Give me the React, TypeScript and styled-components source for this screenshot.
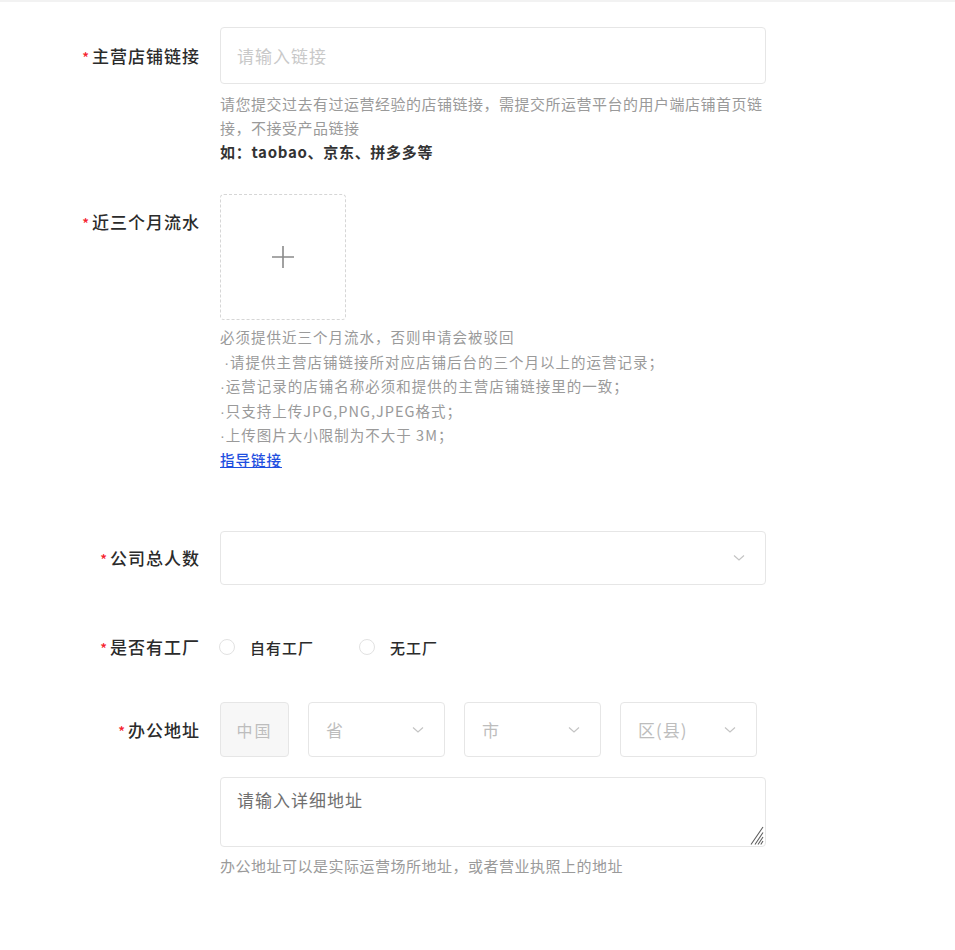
import React from "react";
import styled, { createGlobalStyle } from "styled-components";

const Global = createGlobalStyle`
  html, body { margin: 0; padding: 0; background: #fff; }
  body { font-family: "Noto Sans CJK SC", "Noto Sans", sans-serif; color: #333; }
  * { box-sizing: border-box; }
`;

const Page = styled.div`
  border-top: 2px solid #f2f2f2;
  padding-top: 25px;
  min-height: 950px;
`;

const Row = styled.div<{ $mb?: number }>`
  display: grid;
  grid-template-columns: 200px 546px;
  column-gap: 20px;
  margin-bottom: ${(p) => p.$mb ?? 0}px;
`;

const Label = styled.div<{ $h?: number }>`
  text-align: right;
  font-size: 17px;
  letter-spacing: 1px;
  line-height: ${(p) => p.$h ?? 56}px;
  height: ${(p) => p.$h ?? 56}px;
  font-weight: 500;
  color: #2b2b2b;
  white-space: nowrap;
`;

const Star = styled.span`
  color: #f5222d;
  font-size: 14px;
  margin-right: 3px;
  letter-spacing: 0;
`;

const Field = styled.div`
  display: flex;
  flex-direction: column;
  min-width: 0;
`;

const TextInput = styled.input`
  height: 57px;
  width: 100%;
  border: 1px solid #e6e6e6;
  border-radius: 4px;
  padding: 0 16px;
  font-family: inherit;
  font-size: 17px;
  letter-spacing: 1px;
  color: #333;
  outline: none;
  &::placeholder { color: #c9c9c9; }
`;

const Help = styled.div<{ $mt?: number; $size?: number; $lh?: number; $ls?: number }>`
  margin-top: ${(p) => p.$mt ?? 8}px;
  font-size: ${(p) => p.$size ?? 15}px;
  letter-spacing: ${(p) => p.$ls ?? 0.5}px;
  line-height: ${(p) => p.$lh ?? 24}px;
  color: #9a9a9a;
`;

const Dot = styled.span`
  font-family: "Liberation Sans", sans-serif;
  letter-spacing: 0;
  line-height: 0;
  margin-right: 1px;
`;

const Strong = styled.div`
  color: #333;
  font-weight: 700;
  letter-spacing: 0.7px;
`;

const GuideLink = styled.a`
  color: #1f4fe0;
  text-decoration: underline;
  font-weight: 500;
  cursor: pointer;
`;

const Upload = styled.div`
  width: 126px;
  height: 126px;
  border: 1px dashed #d6d6d6;
  border-radius: 4px;
  display: flex;
  align-items: center;
  justify-content: center;
`;

const Select = styled.div<{ $w?: number; $h?: number }>`
  height: ${(p) => p.$h ?? 54}px;
  width: ${(p) => (p.$w ? `${p.$w}px` : "100%")};
  border: 1px solid #e6e6e6;
  border-radius: 4px;
  display: flex;
  align-items: center;
  justify-content: space-between;
  padding: 0 20px 0 17px;
  font-size: 17px;
  letter-spacing: 1px;
  color: #bdbdbd;
  background: #fff;
  flex-shrink: 0;
`;

const Country = styled.div`
  height: 55px;
  width: 69px;
  border: 1px solid #e6e6e6;
  border-radius: 4px;
  background: #f7f7f7;
  color: #bdbdbd;
  font-size: 16px;
  letter-spacing: 2px;
  display: flex;
  align-items: center;
  justify-content: center;
  flex-shrink: 0;
`;

const AddressRow = styled.div`
  display: flex;
  gap: 19px;
`;

const RadioGroup = styled.div`
  height: 40px;
  display: flex;
  align-items: center;
  gap: 46px;
`;

const RadioItem = styled.label`
  display: flex;
  align-items: center;
  gap: 15px;
  font-size: 15px;
  letter-spacing: 1px;
  color: #2b2b2b;
  font-weight: 500;
`;

const RadioCircle = styled.span`
  width: 16px;
  height: 16px;
  border-radius: 50%;
  border: 1px solid #e2e2e2;
  background: #fff;
  margin-left: -1px;
`;

const TextAreaWrap = styled.div`
  position: relative;
  margin-top: 20px;
  height: 70px;
`;

const TextArea = styled.textarea`
  display: block;
  height: 70px;
  width: 100%;
  border: 1px solid #e6e6e6;
  border-radius: 4px;
  padding: 9px 16px;
  font-family: inherit;
  font-size: 17px;
  letter-spacing: 1px;
  resize: none;
  outline: none;
  &::placeholder { color: #6f6f6f; }
`;

const Grip = styled.svg`
  position: absolute;
  right: 1px;
  bottom: 1px;
  pointer-events: none;
`;

const Chevron = () => (
  <svg width="12" height="8" viewBox="0 0 12 8">
    <polyline points="1,1.5 6,6 11,1.5" fill="none" stroke="#c4c4c4" strokeWidth="1.2" />
  </svg>
);

const Plus = () => (
  <svg width="24" height="24" viewBox="0 0 24 24">
    <path d="M12 1v22M1 12h22" stroke="#8a8a8a" strokeWidth="1.6" fill="none" />
  </svg>
);

const Req = ({ children, h }: { children: React.ReactNode; h?: number }) => (
  <Label $h={h}>
    <Star>*</Star>
    {children}
  </Label>
);

export default function App() {
  return (
    <Page>
      <Global />
      <Row $mb={30}>
        <Req h={57}>主营店铺链接</Req>
        <Field>
          <TextInput placeholder="请输入链接" />
          <Help>
            请您提交过去有过运营经验的店铺链接，需提交所运营平台的用户端店铺首页链接，不接受产品链接
            <Strong>如：taobao、京东、拼多多等</Strong>
          </Help>
        </Field>
      </Row>

      <Row $mb={59}>
        <Req>近三个月流水</Req>
        <Field>
          <Upload>
            <Plus />
          </Upload>
          <Help $mt={5} $size={14.5} $lh={24.5} $ls={1}>
            <div>必须提供近三个月流水，否则申请会被驳回</div>
            <div>&nbsp;<Dot>·</Dot>请提供主营店铺链接所对应店铺后台的三个月以上的运营记录；</div>
            <div><Dot>·</Dot>运营记录的店铺名称必须和提供的主营店铺链接里的一致；</div>
            <div><Dot>·</Dot>只支持上传JPG,PNG,JPEG格式；</div>
            <div><Dot>·</Dot>上传图片大小限制为不大于 3M；</div>
            <div>
              <GuideLink>指导链接</GuideLink>
            </div>
          </Help>
        </Field>
      </Row>

      <Row $mb={42}>
        <Req h={54}>公司总人数</Req>
        <Field>
          <Select>
            <span />
            <Chevron />
          </Select>
        </Field>
      </Row>

      <Row $mb={35}>
        <Req h={40}>是否有工厂</Req>
        <Field>
          <RadioGroup>
            <RadioItem>
              <RadioCircle />
              自有工厂
            </RadioItem>
            <RadioItem>
              <RadioCircle />
              无工厂
            </RadioItem>
          </RadioGroup>
        </Field>
      </Row>

      <Row>
        <Req h={55}>办公地址</Req>
        <Field>
          <AddressRow>
            <Country>中国</Country>
            <Select $w={137} $h={55}>
              <span>省</span>
              <Chevron />
            </Select>
            <Select $w={137} $h={55}>
              <span>市</span>
              <Chevron />
            </Select>
            <Select $w={137} $h={55}>
              <span>区(县)</span>
              <Chevron />
            </Select>
          </AddressRow>
          <TextAreaWrap>
            <TextArea placeholder="请输入详细地址" />
            <Grip width="20" height="22" viewBox="0 0 20 22">
              <path
                d="M18 3L6 20.5M18 8.5L10 20.5M18 13L13 20.5M18 17L15.8 20.5"
                stroke="#5e5e5e"
                strokeWidth="1.1"
                fill="none"
              />
            </Grip>
          </TextAreaWrap>
          <Help $mt={7}>办公地址可以是实际运营场所地址，或者营业执照上的地址</Help>
        </Field>
      </Row>
    </Page>
  );
}
